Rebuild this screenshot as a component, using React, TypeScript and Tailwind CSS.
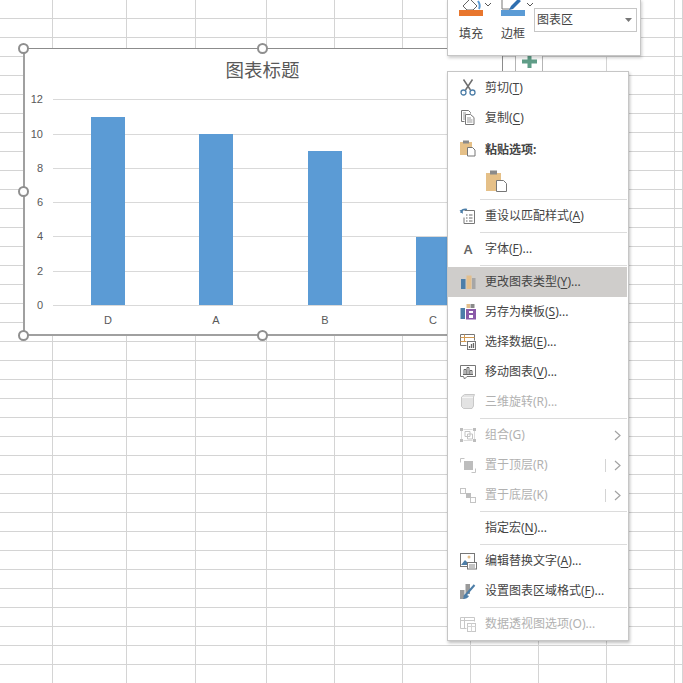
import React from "react";

const CJK = "font-['Noto_Sans','Noto_Sans_CJK_SC',sans-serif]";

const columnWidths = "grid-cols-[53px_74px_69px_71px_68px_68px_68px_68px_68px_68px_8px]";
const cells = Array.from({ length: 36 * 11 });

function Grid() {
  return (
    <div className={`grid ${columnWidths} auto-rows-[19px]`}>
      {cells.map((_, i) => (
        <div key={i} className="border-r border-b border-[#d4d4d4]" />
      ))}
    </div>
  );
}

function Handle({ className }: { className: string }) {
  return <div className={`absolute h-[11px] w-[11px] rounded-full border-2 border-[#8f8f8f] bg-white ${className}`} />;
}

const ticks = [
  { v: "12", y: 99 },
  { v: "10", y: 134 },
  { v: "8", y: 168 },
  { v: "6", y: 202 },
  { v: "4", y: 236 },
  { v: "2", y: 271 },
  { v: "0", y: 305 },
];
const bars = [
  { l: "D", x: 91, top: 117 },
  { l: "A", x: 199, top: 134 },
  { l: "B", x: 308, top: 151 },
  { l: "C", x: 416, top: 237 },
];

function Chart() {
  return (
    <div className="absolute left-[23px] top-[48px] h-[288px] w-[480px]">
      <div className="h-full w-full border border-b-2 border-l-2 border-[#8c8c8c] border-b-[#a0a0a0] border-l-[#a0a0a0] bg-white">
        <svg width="477" height="285" viewBox="25 49 477 285" className="block">
          <text x="262.500" y="77" textAnchor="middle" fontSize="18.500" fill="#595959" fontFamily="'Noto Sans CJK SC',sans-serif">
            图表标题
          </text>
          {ticks.map((t) => (
            <g key={t.v}>
              <rect x="53" y={t.y} width="450" height="1" fill="#d9d9d9" />
              <text x="43" y={t.y + 4} textAnchor="end" fontSize="11" fill="#595959" fontFamily="'Liberation Sans',sans-serif">
                {t.v}
              </text>
            </g>
          ))}
          {bars.map((b) => (
            <g key={b.l}>
              <rect x={b.x} y={b.top} width="34" height={305 - b.top} fill="#5b9bd5" />
              <text x={b.x + 17} y="324" textAnchor="middle" fontSize="11" fill="#595959" fontFamily="'Liberation Sans',sans-serif">
                {b.l}
              </text>
            </g>
          ))}
        </svg>
      </div>
      <Handle className="left-[-5px] top-[-5px]" />
      <Handle className="left-[234px] top-[-5px]" />
      <Handle className="left-[-5px] top-[138px]" />
      <Handle className="left-[-5px] top-[282px]" />
      <Handle className="left-[234px] top-[282px]" />
    </div>
  );
}

function PlusButton() {
  return (
    <div className="absolute left-[515px] top-[50px] flex h-[25px] w-[28px] items-end justify-center border border-[#b5b5b5] bg-white pb-[6px]">
      <svg width="15" height="13" viewBox="0 0 15 13">
        <path d="M5.5 0h4v4.500H15v4H9.500V13h-4V8.500H0v-4h5.500z" fill="#5f9d87" />
      </svg>
    </div>
  );
}

function Toolbar() {
  return (
    <div className={`absolute left-[447px] top-[-1px] h-[57px] w-[194px] border border-[#c6c6c6] bg-white shadow-[1px_2px_3px_rgba(0,0,0,0.2)] ${CJK}`}>
      <div className="flex pl-[11px]">
        <ToolButton label="填充" color="#e8762d" kind="fill" />
        <div className="w-[18px]" />
        <ToolButton label="边框" color="#5b9bd5" kind="pen" />
        <div className="ml-[9px] mt-[8px] flex h-[24px] w-[103px] items-center justify-between border border-[#c6c6c6] pl-[2px] pr-[4px] text-[12px] text-[#444]">
          <span>图表区</span>
          <svg width="7" height="4" viewBox="0 0 7 4">
            <path d="M0 0h7L3.500 4z" fill="#777" />
          </svg>
        </div>
      </div>
    </div>
  );
}

function ToolButton({ label, color, kind }: { label: string; color: string; kind: "fill" | "pen" }) {
  return (
    <div className="flex w-[24px] flex-col">
      <div className="relative h-[17px] w-[24px]">
        {kind === "fill" ? (
          <svg width="24" height="10" viewBox="0 0 24 10" className="block">
            <path d="M4 6l7-7 7 7-4 4H8z" fill="#fff" stroke="#666" strokeWidth="1" />
            <path d="M19 1c2 3 2 6 1 8" stroke="#5b9bd5" strokeWidth="2" fill="none" />
          </svg>
        ) : (
          <svg width="24" height="10" viewBox="0 0 24 10" className="block">
            <path d="M1 0v9h8" stroke="#777" fill="none" />
            <path d="M8 10l2-4 7-7 3 2-8 8z" fill="#2f6fb0" />
          </svg>
        )}
        <div className="h-[6px] w-[24px]" style={{ backgroundColor: color }} />
        <svg width="8" height="5" viewBox="0 0 8 5" className="absolute left-[25px] top-[2px]">
          <path d="M1 1l3 3 3-3" fill="none" stroke="#555" />
        </svg>
      </div>
      <div className="mt-[9px] whitespace-nowrap text-[12px] leading-[16px] text-[#444]">{label}</div>
    </div>
  );
}

type IconName =
  | "cut" | "copy" | "paste" | "reset" | "font" | "type" | "save" | "data" | "move"
  | "rotate" | "group" | "front" | "back" | "alt" | "format" | "pivot";

function Icon({ name }: { name: IconName }) {
  const s = { width: 18, height: 18, viewBox: "0 0 18 18" };
  switch (name) {
    case "cut":
      return (
        <svg {...s}>
          <path d="M4.500 0.500l7 10.500M13.500 0.500l-7 10.500" stroke="#6e6e6e" strokeWidth="1.500" fill="none" />
          <circle cx="4.500" cy="13.500" r="2.500" fill="none" stroke="#4d7ea8" strokeWidth="1.300" />
          <circle cx="13.500" cy="13.500" r="2.500" fill="none" stroke="#4d7ea8" strokeWidth="1.300" />
        </svg>
      );
    case "copy":
      return (
        <svg {...s}>
          <path d="M2.500 1.500h7l2 2v1M2.500 1.500v11h3" fill="none" stroke="#777" />
          <path d="M6.500 5.500h5l3.500 3v7H6.500z" fill="#fff" stroke="#777" />
          <path d="M8 9h4M8 11h5.500M8 13h5.500M4 4h3M4 6h2M4 8h2M4 10h2" stroke="#999" />
        </svg>
      );
    case "paste":
      return (
        <svg {...s}>
          <rect x="1" y="3" width="12" height="13" fill="#e5c088" />
          <rect x="4" y="1.500" width="6" height="3" fill="#8a8a8a" />
          <path d="M8.500 8.500h5l2.500 2.500v6h-7.500z" fill="#fff" stroke="#777" />
        </svg>
      );
    case "reset":
      return (
        <svg {...s}>
          <path d="M5.500 3.500h10v13H5v-6" fill="#fff" stroke="#777" />
          <path d="M2 6c.5-3 3-4.500 6-3.500" stroke="#4d7ea8" strokeWidth="1.500" fill="none" />
          <path d="M.5 3.500l3.500 3.500-.5-4.500z" fill="#4d7ea8" />
          <path d="M7 8h1.500M10 8h3.500M7 11h1.500M10 11h3.500M7 14h1.500M10 14h3.500" stroke="#666" />
        </svg>
      );
    case "font":
      return <span className="font-['Noto_Sans',sans-serif] text-[13px] font-semibold leading-[18px] text-[#666]">A</span>;
    case "type":
      return (
        <svg {...s}>
          <rect x="2" y="6" width="4.500" height="10" fill="#4d7ea8" />
          <rect x="7.500" y="2.500" width="5" height="13.500" fill="#e3bf8d" />
          <rect x="13" y="5" width="3.500" height="11" fill="#a6a6a6" />
        </svg>
      );
    case "save":
      return (
        <svg {...s}>
          <rect x="1.500" y="5" width="4.500" height="11" fill="#4d7ea8" />
          <rect x="7.500" y="1" width="3.500" height="4" fill="#e3bf8d" />
          <rect x="11.500" y="1" width="4" height="4" fill="#8a8a8a" />
          <path d="M7 6h10v10.500H7zM10 8v2h4V8zM10 12v3h4v-3z" fill="#8a5aa8" fillRule="evenodd" />
        </svg>
      );
    case "data":
      return (
        <svg {...s}>
          <path d="M1.500 1.500h14v6M1.500 1.500v11h6" fill="none" stroke="#777" />
          <path d="M1.500 4.500h14M1.500 8.500h6M5.500 1.500v7" stroke="#d39a52" />
          <rect x="8.500" y="8.500" width="8" height="8" fill="#fff" stroke="#777" />
          <path d="M10.500 15v-2M12.500 15v-4M14.500 15v-5" stroke="#666" strokeWidth="1.300" />
        </svg>
      );
    case "move":
      return (
        <svg {...s}>
          <path d="M1.500 2.500h15v11H8l-2.500 2.500-1-2.500h-3z" fill="#fff" stroke="#777" />
          <path d="M5 11V6.500h2V11M8 11V4.500h2V11M11 11V7.500h2V11M4 11.500h10" fill="none" stroke="#666" />
        </svg>
      );
    case "rotate":
      return (
        <svg {...s}>
          <path d="M2.500 4l3-2.500h10l-1 2.500v9l-1.500 2.500H4.500l-2-2z" fill="#e3e3e3" stroke="#c8c8c8" />
          <path d="M3 4.500h11" stroke="#f6f6f6" />
        </svg>
      );
    case "group":
      return (
        <svg {...s}>
          <path d="M1 2h3v3H1zM14 2h3v3h-3zM1 13h3v3H1zM14 13h3v3h-3z" fill="#bdbdbd" />
          <path d="M6 5.500h5v5H6zM8.500 8h5v5h-5z" fill="none" stroke="#c4c4c4" />
          <path d="M4.500 3.500h9M4.500 14.500h9M2.500 5v8M15.500 5v8" stroke="#dcdcdc" />
        </svg>
      );
    case "front":
      return (
        <svg {...s}>
          <path d="M1.500 6.500v-4h4M12.500 16.500h4v-4" fill="none" stroke="#c4c4c4" />
          <rect x="5" y="5" width="9" height="9" fill="#bdbdbd" />
        </svg>
      );
    case "back":
      return (
        <svg {...s}>
          <rect x="1.500" y="2.500" width="5" height="5" fill="#fff" stroke="#c4c4c4" />
          <rect x="11.500" y="11.500" width="5" height="5" fill="#fff" stroke="#c4c4c4" />
          <path d="M7 7h5v5H7z" fill="#bdbdbd" />
        </svg>
      );
    case "alt":
      return (
        <svg {...s}>
          <rect x="1.500" y="1.500" width="14" height="13" fill="#fff" stroke="#777" />
          <circle cx="10" cy="5" r="1.500" fill="#e3bf8d" />
          <path d="M2 13l4-5 3 3 2 2z" fill="#4d7ea8" />
          <rect x="8.500" y="10.500" width="9" height="6.500" fill="#fff" stroke="#777" />
          <path d="M10 13h6M10 15h6" stroke="#888" />
        </svg>
      );
    case "format":
      return (
        <svg {...s}>
          <rect x="1" y="8" width="4.500" height="9" fill="#9a9a9a" />
          <rect x="6.500" y="2" width="4.500" height="10" fill="#9a9a9a" />
          <path d="M15.500 3L5 15" stroke="#4d7ea8" strokeWidth="2" />
          <path d="M4 17l2-5 4 2c-1 2-3 3-6 3z" fill="#4d7ea8" />
        </svg>
      );
    case "pivot":
      return (
        <svg {...s}>
          <path d="M1.500 2.500h14v4M1.500 2.500v11h6M1.500 5.500h14M5.500 2.500v11" fill="none" stroke="#c8c8c8" />
          <rect x="8.500" y="8.500" width="8" height="8" fill="#fff" stroke="#c8c8c8" />
          <path d="M8.500 11.500h8M12.500 8.500v8" stroke="#d4d4d4" />
        </svg>
      );
  }
}

type Item = {
  icon?: IconName;
  pre: string;
  k?: string;
  post?: string;
  disabled?: boolean;
  active?: boolean;
  arrow?: boolean;
  divider?: boolean;
};

function Row({ icon, pre, k, post = ")", disabled, active, arrow, divider }: Item) {
  return (
    <div
      className={`relative flex h-[30px] items-center text-[12px] leading-[16px] ${disabled ? "text-[#b1b1b1]" : "text-[#444]"} ${active ? "bg-[#cfcdcb]" : ""}`}
    >
      <div className="flex w-[37px] justify-center pl-[3px]">{icon && <Icon name={icon} />}</div>
      <span className="whitespace-nowrap">
        {pre}
        {k && <u className="underline-offset-2">{k}</u>}
        {k && post}
      </span>
      {arrow && (
        <div className="ml-auto flex items-center pr-[6px]">
          {divider && <div className="mr-[8px] h-[13px] w-px bg-[#d4d4d4]" />}
          <svg width="7" height="11" viewBox="0 0 7 11">
            <path d="M1 1l5 4.500-5 4.500" fill="none" stroke="#a3a3a3" strokeWidth="1.200" />
          </svg>
        </div>
      )}
    </div>
  );
}

function Sep() {
  return (
    <div className="flex h-[3px] items-center pl-[32px]">
      <div className="h-px w-full bg-[#dcdcdc]" />
    </div>
  );
}

function Menu() {
  return (
    <div className={`absolute left-[447px] top-[71px] h-[570px] w-[182px] border border-[#c6c6c6] bg-white py-px pr-px shadow-[1px_2px_3px_rgba(0,0,0,0.25)] ${CJK}`}>
      <Row icon="cut" pre="剪切(" k="T" />
      <Row icon="copy" pre="复制(" k="C" />
      <Row icon="paste" pre="" />
      <div className="mt-[-30px] flex h-[30px] items-center pl-[37px] pt-[3px] text-[12px] font-bold text-[#444]">粘贴选项:</div>
      <div className="flex h-[35px] items-center pl-[37px]">
        <svg width="24" height="24" viewBox="0 0 24 24">
          <rect x="1" y="4" width="15" height="18" fill="#e5c088" />
          <rect x="5" y="1.500" width="7" height="4" fill="#8a8a8a" />
          <path d="M11.500 11.500h7l3 3v8h-10z" fill="#fff" stroke="#777" />
        </svg>
      </div>
      <Sep />
      <Row icon="reset" pre="重设以匹配样式(" k="A" />
      <Sep />
      <Row icon="font" pre="字体(" k="F" post=")..." />
      <Sep />
      <Row icon="type" pre="更改图表类型(" k="Y" post=")..." active />
      <Row icon="save" pre="另存为模板(" k="S" post=")..." />
      <Row icon="data" pre="选择数据(" k="E" post=")..." />
      <Row icon="move" pre="移动图表(" k="V" post=")..." />
      <Row icon="rotate" pre="三维旋转(R)..." disabled />
      <Sep />
      <Row icon="group" pre="组合(G)" disabled arrow />
      <Row icon="front" pre="置于顶层(R)" disabled arrow divider />
      <Row icon="back" pre="置于底层(K)" disabled arrow divider />
      <Sep />
      <Row pre="指定宏(" k="N" post=")..." />
      <Sep />
      <Row icon="alt" pre="编辑替换文字(" k="A" post=")..." />
      <Row icon="format" pre="设置图表区域格式(" k="F" post=")..." />
      <Sep />
      <Row icon="pivot" pre="数据透视图选项(O)..." disabled />
    </div>
  );
}

export default function App() {
  return (
    <div className="relative h-[683px] w-[683px] overflow-hidden bg-white">
      <Grid />
      <Chart />
      <PlusButton />
      <Toolbar />
      <Menu />
    </div>
  );
}
